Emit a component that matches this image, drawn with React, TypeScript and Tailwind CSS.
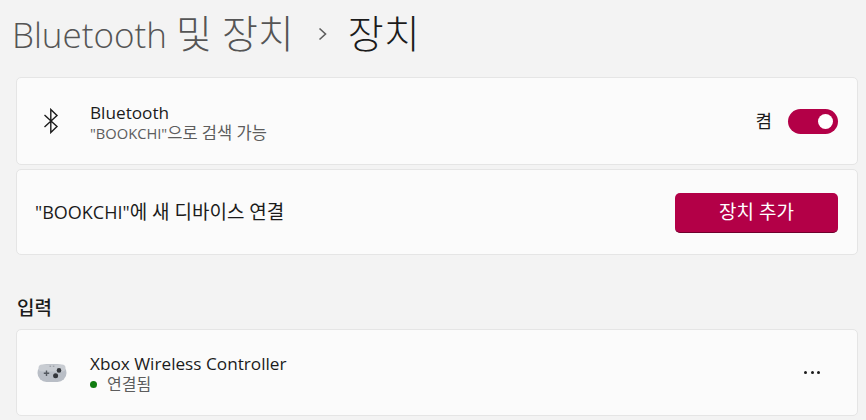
import React from "react";

const FONT = "font-['Open_Sans','Noto_Sans_CJK_KR',sans-serif]";

function BluetoothIcon() {
  return (
    <svg width="16" height="26" viewBox="0 0 16 26" fill="none" stroke="#1b1b1b" strokeWidth="1.4">
      <path d="M1.5 7 14 18.5 7.8 24.5V1.5L14 7.5 1.5 19" strokeLinejoin="miter" />
    </svg>
  );
}

function GamepadIcon() {
  return (
    <svg width="30" height="20" viewBox="0 0 30 20">
      <rect x="0.5" y="1" width="29" height="18" rx="9" fill="#b9bec6" />
      <rect x="1.5" y="1.5" width="27" height="7" rx="3.5" fill="#c8ccd2" />
      <path d="M9.5 7.5v5.5M6.8 10.2h5.4" stroke="#555a61" strokeWidth="1.4" />
      <circle cx="22" cy="7.4" r="2.3" fill="#33363b" />
      <circle cx="18.6" cy="12.8" r="2.5" fill="#33363b" />
      <path d="M12.5 3.2h1.6M15.8 3.2h1.6" stroke="#8d9299" strokeWidth="1" />
    </svg>
  );
}

export default function App() {
  return (
    <div className={`${FONT} w-[866px] h-[420px] overflow-hidden bg-[#f3f3f3] pl-4 pr-2 text-[#1b1b1b]`}>
      <div className="flex items-center h-[64px] -ml-1 text-[35px] font-light leading-none whitespace-nowrap">
        <span className="text-[#555555]">Bluetooth <span className="text-[39px]">및 장치</span></span>
        <span className="ml-[24px] mr-[20px] mt-1">
          <svg width="10" height="14" viewBox="0 0 10 14" fill="none" stroke="#5d5d5d" strokeWidth="1.6"><path d="M1.5 1.5 7.5 7l-6 5.5" /></svg>
        </span>
        <span className="text-[39px] text-[#1b1b1b]">장치</span>
      </div>

      <div className="mt-[13px] flex flex-col gap-[4px]">
        <div className="flex items-center h-[88px] bg-[#fbfbfb] border border-[#e5e5e5] rounded-[5px] pl-[26px] pr-[19px]">
          <div className="w-[16px] flex justify-center"><BluetoothIcon /></div>
          <div className="ml-[31px] flex-1 pt-[3px]">
            <div className="text-[17.2px] leading-[20px]">Bluetooth</div>
            <div className="text-[14.7px] leading-[20px] text-[#5d5d5d]">"BOOKCHI"<span className="text-[16.5px]">으로 검색 가능</span></div>
          </div>
          <span className="text-[18px] mr-4">켬</span>
          <div className="w-[50px] h-[25px] rounded-full bg-[#b30047] flex items-center justify-end pr-[5px]">
            <div className="w-[15px] h-[15px] rounded-full bg-white" />
          </div>
        </div>

        <div className="flex items-center justify-between h-[86px] bg-[#fbfbfb] border border-[#e5e5e5] rounded-[5px] pl-[18px] pr-[19px]">
          <span className="text-[18px] pt-[1px]">"BOOKCHI"<span className="text-[19px]">에 새 디바이스 연결</span></span>
          <button className="mt-[2px] w-[163px] h-[40px] rounded-[5px] bg-[#b30047] border-b border-[#6e002c] text-white text-[19px]">장치 추가</button>
        </div>
      </div>

      <div className="mt-[41px] ml-[1px] text-[19px] leading-[24px] font-medium">입력</div>

      <div className="mt-[9px] flex items-center h-[87px] bg-[#fbfbfb] border border-[#e5e5e5] rounded-[5px] pl-[20px] pr-[37px]">
        <GamepadIcon />
        <div className="ml-[23px] flex-1 pt-[3px]">
          <div className="text-[17.2px] leading-[20px]">Xbox Wireless Controller</div>
          <div className="flex items-center text-[16px] leading-[20px] text-[#5d5d5d]">
            <span className="w-[7px] h-[7px] rounded-full bg-[#107c10] mr-[10px]" />연결됨
          </div>
        </div>
        <div className="flex gap-[3.5px]">
          <span className="w-[3px] h-[3px] rounded-full bg-[#1b1b1b]" />
          <span className="w-[3px] h-[3px] rounded-full bg-[#1b1b1b]" />
          <span className="w-[3px] h-[3px] rounded-full bg-[#1b1b1b]" />
        </div>
      </div>
    </div>
  );
}
